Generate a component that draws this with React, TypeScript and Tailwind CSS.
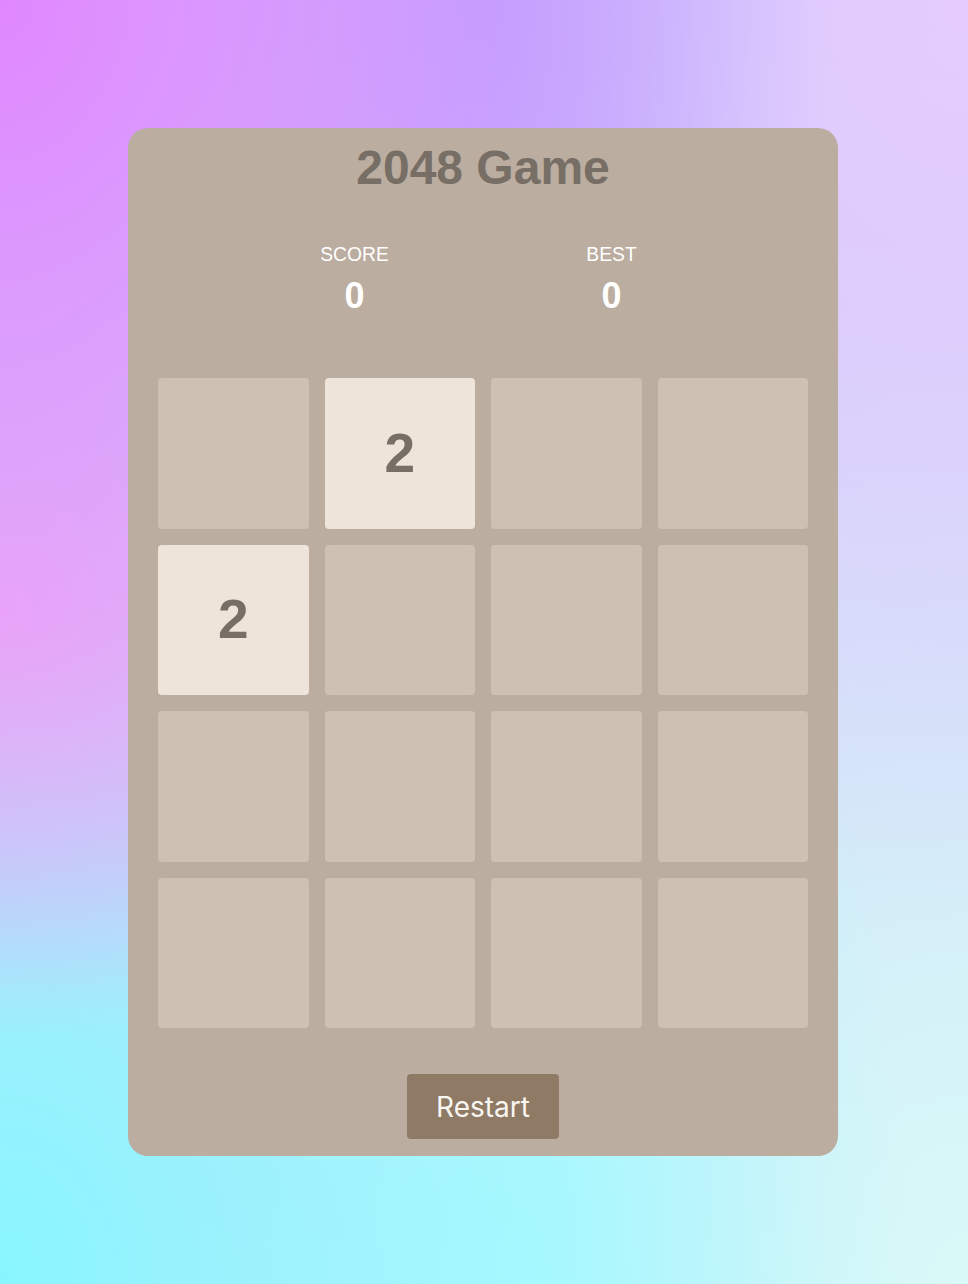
const board = [
  [0, 2, 0, 0],
  [2, 0, 0, 0],
  [0, 0, 0, 0],
  [0, 0, 0, 0],
]

const Tile = ({ value }: { value: number }) => (
  <div
    className={`aspect-square rounded-[4px] flex items-center justify-center ${
      value ? 'bg-[#eee4da]' : 'bg-[#cdc1b4]'
    }`}
  >
    {value ? (
      <span className="text-[55px] font-bold text-[#776e65] leading-none">{value}</span>
    ) : null}
  </div>
)

const Stat = ({ label, value }: { label: string; value: number }) => (
  <div className="flex flex-col items-center text-white">
    <span className="text-[19.3px] leading-[22px]">{label}</span>
    <span className="mt-[10.5px] text-[36px] font-bold leading-[40px]">{value}</span>
  </div>
)

export default function App() {
  return (
    <div
      className="min-h-screen w-full pt-[128px] pb-[129px] font-['Liberation_Sans',Arial,sans-serif] bg-[radial-gradient(at_0%_0%,#e087ff_0,transparent_55%),radial-gradient(at_50%_0%,#b8a8ff_0,transparent_50%),radial-gradient(at_100%_0%,#e6ccff_0,transparent_50%),radial-gradient(at_0%_48%,#eeb4f4_0,transparent_45%),radial-gradient(at_0%_100%,#88f6ff_0,transparent_60%),radial-gradient(at_55%_100%,#b4faff_0,transparent_50%),radial-gradient(at_100%_100%,#d8faf8_0,transparent_55%),linear-gradient(#cfc8fa,#cfe4f8)]"
    >
      <div className="w-[966px]">
        <div className="mx-auto w-[710px] rounded-[20px] bg-[#bbada0] px-[30px] pt-[12px] pb-[17px]">
          {/* Header */}
          <h1 className="text-center text-[48px] font-bold leading-[55px] text-[#776e65]">2048 Game</h1>

          <div className="mx-auto mt-[48.5px] grid w-[514px] grid-cols-2">
            <Stat label="SCORE" value={0} />
            <Stat label="BEST" value={0} />
          </div>

          {/* Board */}
          <div className="mt-[62px] grid grid-cols-4 gap-4">
            {board.flat().map((v, i) => (
              <Tile key={i} value={v} />
            ))}
          </div>

          <div className="mt-[46px] flex justify-center">
            <button className="h-[65px] w-[152px] rounded-[4px] bg-[#8f7a66] font-['Inter',sans-serif] text-[28px] text-[#f9f6f2]">
              Restart
            </button>
          </div>
        </div>
      </div>
    </div>
  )
}
